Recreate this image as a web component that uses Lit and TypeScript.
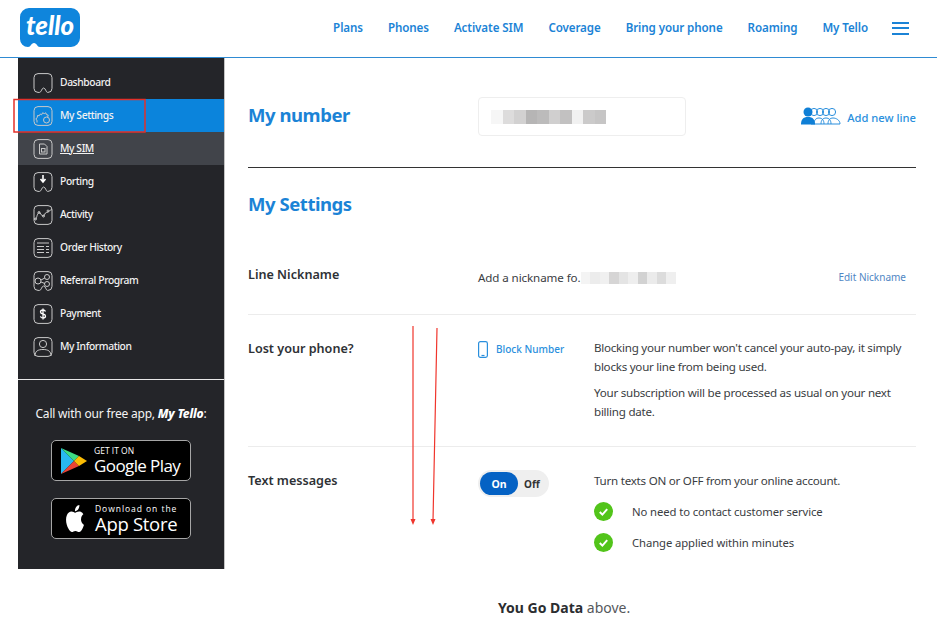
import { LitElement, html, css, svg } from "lit";
import { customElement } from "lit/decorators.js";

const NAV = ["Plans", "Phones", "Activate SIM", "Coverage", "Bring your phone", "Roaming", "My Tello"];

// the outline every side menu icon shares, a rounded square with a notch at the bottom
const BUBBLE = "M5 .6h10a4 4 0 0 1 4 4v10.800a4 4 0 0 1-4 4h-.5c-1.600 0-1.800-4.400-4-4.400-1.800 0-2 4.400-4 4.400H5a4 4 0 0 1-4-4V4.600a4 4 0 0 1 4-4z";
const BOX = "M5 .6h10a4 4 0 0 1 4 4v10.800a4 4 0 0 1-4 4H5a4 4 0 0 1-4-4V4.600a4 4 0 0 1 4-4z";

const MENU = [
  { label: "Dashboard", outline: BUBBLE, inner: svg`` },
  {
    label: "My Settings",
    outline: BOX,
    inner: svg`<path d="M4 16.500v-2.300l-1.200-1 1.500-2 .2-1.700 1.800.2 1-1.700 1.300.8 1-2 1.700.8 1.500-.8.6 1.800 1.800.5-.5 2"/><circle cx="13.500" cy="14" r="3"/>`,
    active: true,
  },
  {
    label: "My SIM",
    outline: BOX,
    inner: svg`<path d="M6.500 5h5l2.500 2.500V15H6.500z"/><rect x="8.500" y="9.500" width="3.500" height="3.500"/>`,
    current: true,
  },
  {
    label: "Porting",
    outline: BUBBLE,
    inner: svg`<path d="M10 3v6M7.500 7l2.500 3 2.500-3" stroke="#fff" stroke-width="1.600"/>`,
  },
  {
    label: "Activity",
    outline: BOX,
    inner: svg`<path d="M1 14h1.500c1.500 0 1-5 3.500-6.500 1.500-.5 2 3.500 4 3.500s1.500-3.500 3.500-3.500 1.500-1.500 5.500-3"/><circle cx="2.500" cy="14" r="1"/><circle cx="6" cy="7.500" r="1"/><circle cx="10.500" cy="11" r="1"/><circle cx="15" cy="6" r="1"/>`,
  },
  {
    label: "Order History",
    outline: BOX,
    inner: svg`<path d="M4 5h12M4 8.500h7M13 8.500h3M4 11.500h7M13 11.500h3M4 14.500h7M13 14.500h3"/>`,
  },
  {
    label: "Referral Program",
    outline: BUBBLE,
    inner: svg`<circle cx="5" cy="10" r="3"/><circle cx="14" cy="6" r="2.500"/><circle cx="14" cy="13" r="2.500"/><path d="M8 9l3.800-2M8 11l3.800 1.500"/>`,
  },
  {
    label: "Payment",
    outline: BOX,
    inner: svg`<path d="M12.500 7.500c-.5-1.200-1.500-1.500-2.500-1.500-1.500 0-2.500.8-2.500 2s1 1.700 2.500 2 2.500.8 2.500 2-1 2-2.500 2c-1.200 0-2.200-.5-2.600-1.600M10 4.500v11" stroke="#fff" stroke-width="1.300"/>`,
  },
  {
    label: "My Information",
    outline: BOX,
    inner: svg`<circle cx="10" cy="7" r="3.600"/><path d="M2 19c0-5 3-6.500 8-6.500s8 1.500 8 6.500"/>`,
  },
];

const NUMBER_BLUR = ["#f6f6f6", "#dddcdc", "#d2d1d1", "#b6b5b5", "#bcbbbb", "#d0cfcf", "#c2c1c1", "#f1f1f1", "#cbcaca", "#c6c5c5"];
const NICK_BLUR = ["#f4f4f4", "#ececec", "#f0f0f0", "#d6d5d5", "#e4e4e4", "#eeeeee", "#d2d2d2", "#ebebeb", "#dcdcdc", "#efefef"];

@customElement("app-root")
export class AppRoot extends LitElement {
  static styles = css`
    :host {
      display: block;
      position: relative;
      width: 937px;
      height: 634px;
      overflow: hidden;
      background: #fff;
      font-family: "Noto Sans", "Open Sans", sans-serif;
      color: #3a3d42;
    }
    a {
      color: inherit;
      text-decoration: none;
    }

    /* top bar */
    .top {
      height: 57px;
      border-bottom: 1px solid #2f8bd3;
      display: flex;
      align-items: center;
      padding: 0 20px;
    }
    .logo {
      display: block;
      margin-top: -2px;
    }
    .logo text {
      font-family: "Lato", sans-serif;
      font-weight: 900;
      font-style: italic;
      font-size: 26px;
      fill: #fff;
    }
    .nav {
      margin-left: auto;
      margin-top: -2px;
      padding-right: 8px;
      display: flex;
      align-items: center;
      gap: 25px;
      font-size: 11.600px;
      font-weight: 600;
      letter-spacing: -0.1px;
      color: #1b83d6;
    }
    .burger {
      width: 17px;
      height: 13px;
      margin-left: -1px;
      margin-top: 1px;
      border-top: 2px solid #1b83d6;
      border-bottom: 2px solid #1b83d6;
      position: relative;
      box-sizing: border-box;
    }
    .burger::after {
      content: "";
      position: absolute;
      left: 0;
      right: 0;
      top: 3.500px;
      height: 2px;
      background: #1b83d6;
    }

    .body {
      display: flex;
    }

    /* side menu */
    .side {
      margin-left: 18px;
      width: 206px;
      height: 511px;
      background: #242529;
      border-right: 1px solid #c4c4c4;
      flex: none;
      display: flex;
      flex-direction: column;
      color: #fff;
    }
    .menu {
      padding: 8px 0 16px;
      border-bottom: 1px solid #e8e8e8;
    }
    .item {
      height: 33px;
      display: flex;
      align-items: center;
      gap: 7px;
      padding-left: 15px;
      font-size: 10.300px;
      font-weight: 500;
      letter-spacing: -0.4px;
      color: #f2f2f2;
    }
    .item span {
      margin-top: -2px;
    }
    .item.active {
      background: #0b84dc;
    }
    .item.current {
      background: #41444a;
    }
    .item.current span {
      text-decoration: underline;
    }
    .item svg {
      fill: none;
      stroke: #c9c9c9;
      stroke-width: 1;
      flex: none;
    }
    .app {
      display: flex;
      flex-direction: column;
      align-items: center;
      padding-top: 25px;
    }
    .app p {
      margin: 0 0 18px;
      font-size: 12px;
      line-height: 17px;
      letter-spacing: -0.2px;
      color: #f4f4f4;
    }
    .app b {
      font-style: italic;
      font-weight: 800;
      color: #fff;
    }
    .store {
      width: 140px;
      height: 41px;
      box-sizing: border-box;
      background: #000;
      border: 1px solid #a6a6a6;
      border-radius: 5px;
      display: flex;
      align-items: center;
      margin-bottom: 17px;
      color: #fff;
    }
    .store .small {
      display: block;
      font-family: "Open Sans", sans-serif;
      font-size: 8.500px;
      line-height: 10px;
    }
    .store .big {
      display: block;
      font-family: "Open Sans", sans-serif;
      font-size: 17px;
      line-height: 19px;
      letter-spacing: -0.6px;
    }
    .gplay {
      gap: 6px;
      padding-left: 9px;
    }
    .astore {
      gap: 9px;
      padding-left: 12px;
    }
    .astore .small {
      letter-spacing: 0.95px;
    }
    .astore .big {
      font-size: 18.500px;
      line-height: 20px;
      letter-spacing: -0.3px;
    }

    /* main column */
    .main {
      margin-left: 23px;
      width: 668px;
    }
    h2 {
      margin: 0;
      font-size: 18.500px;
      font-weight: 700;
      letter-spacing: -0.45px;
      line-height: 26px;
      color: #1b83d6;
    }
    .number {
      height: 110px;
      box-sizing: border-box;
      border-bottom: 1px solid #333;
      display: grid;
      grid-template-columns: 230px 208px 1fr;
      padding-top: 39px;
      align-items: start;
    }
    .number h2 {
      margin-top: 5px;
    }
    .numbox {
      height: 39px;
      box-sizing: border-box;
      border: 1px solid #eeeeee;
      border-radius: 4px;
      display: flex;
      align-items: center;
      padding-left: 12px;
    }
    .blur {
      display: flex;
    }
    .blur i {
      display: block;
      width: 11.500px;
      height: 14px;
    }
    .nick-blur i {
      width: 9.500px;
      height: 12px;
    }
    .add {
      display: flex;
      align-items: center;
      justify-content: flex-end;
      gap: 6px;
      margin-top: 9px;
      font-size: 11.200px;
      font-weight: 500;
      color: #2a8fdd;
    }
    .add span {
      margin-top: 4px;
    }
    .settings-title {
      margin-top: 23px;
    }
    .row {
      display: grid;
      grid-template-columns: 230px 116px 1fr;
      border-bottom: 1px solid #ececec;
    }
    .row.plain {
      border-bottom: 0;
    }
    .row h3 {
      margin: 0;
      font-size: 12.600px;
      line-height: 18px;
      font-weight: 600;
      color: #2e3135;
    }
    .nickname {
      height: 98px;
      box-sizing: border-box;
      padding-top: 49px;
      grid-template-columns: 230px 1fr auto;
    }
    .nick-text {
      display: flex;
      font-size: 11.600px;
      line-height: 18px;
      letter-spacing: -0.1px;
      padding-top: 2.500px;
    }
    .nick-blur {
      margin-top: 3px;
    }
    .edit {
      font-size: 10px;
      line-height: 18px;
      padding: 2px 10px 0 0;
      color: #4f86c4;
    }
    .lost {
      height: 132px;
      box-sizing: border-box;
      padding-top: 25px;
    }
    .block {
      display: flex;
      align-items: center;
      gap: 8px;
      height: 18px;
      font-size: 10px;
      font-weight: 500;
      color: #2a8fdd;
    }
    .copy p {
      margin: 0 0 7px;
      font-size: 11.600px;
      line-height: 19px;
      letter-spacing: -0.25px;
    }
    .lost .copy {
      margin-top: -2px;
    }
    .texts {
      padding-top: 25px;
    }
    .switch {
      width: 71px;
      height: 27px;
      box-sizing: border-box;
      padding: 2px;
      border-radius: 14px;
      background: #efefef;
      display: flex;
      align-items: center;
      font-size: 10.500px;
      font-weight: 700;
      color: #333;
      margin-top: -2px;
    }
    .switch .on {
      width: 38px;
      height: 23px;
      border-radius: 12px;
      background: #0562c4;
      color: #fff;
      display: flex;
      align-items: center;
      justify-content: center;
    }
    .switch .off {
      margin-left: 6px;
      font-size: 10px;
    }
    .check {
      display: flex;
      align-items: center;
      gap: 19px;
      height: 31px;
      font-size: 11.300px;
      letter-spacing: -0.1px;
    }
    .copy .lead {
      margin-bottom: 6px;
      margin-top: -1px;
    }
    .tail {
      position: absolute;
      left: 498px;
      top: 598px;
      font-size: 14px;
      line-height: 19px;
      color: #55585c;
    }
    .tail b {
      color: #2b2d30;
    }

    /* markup drawn over the screenshot */
    .mark {
      position: absolute;
      left: 0;
      top: 0;
      pointer-events: none;
    }
  `;

  private renderIcon(outline: string, inner: unknown) {
    return html`<svg width="20" height="20" viewBox="0 0 20 20"><path d=${outline} />${inner}</svg>`;
  }

  private renderBlur(cells: string[], extra = "") {
    return html`<div class="blur ${extra}">
      ${cells.map((c) => html`<i style="background:${c}"></i>`)}
    </div>`;
  }

  private renderCheck(text: string) {
    return html`<div class="check">
      <svg width="19" height="19" viewBox="0 0 19 19">
        <circle cx="9.500" cy="9.500" r="9.500" fill="#52c41a" />
        <path d="M5.800 10l2.600 2.600 4.800-5.400" fill="none" stroke="#fff" stroke-width="2" />
      </svg>
      <span>${text}</span>
    </div>`;
  }

  render() {
    return html`
      <header class="top">
        <svg class="logo" width="60" height="39" viewBox="0 0 60 39">
          <path
            d="M9 0h42a9 9 0 0 1 9 9v21a9 9 0 0 1-9 9H20c-3 0-3-4-6-4s-3 4-6 4a8 8 0 0 1-8-8V9a9 9 0 0 1 9-9z"
            fill="#0f85dc"
          />
          <text x="6" y="27" textLength="48" lengthAdjust="spacingAndGlyphs">tello</text>
        </svg>
        <nav class="nav">
          ${NAV.map((n) => html`<a href="#">${n}</a>`)}
          <div class="burger"></div>
        </nav>
      </header>

      <div class="body">
        <aside class="side">
          <div class="menu">
            ${MENU.map(
              (m) => html`<div class="item ${m.active ? "active" : ""} ${m.current ? "current" : ""}">
                ${this.renderIcon(m.outline, m.inner)}<span>${m.label}</span>
              </div>`
            )}
          </div>
          <div class="app">
            <p>Call with our free app, <b>My Tello</b>:</p>
            <a class="store gplay" href="#">
              <svg width="27" height="28" viewBox="0 0 27 28">
                <path d="M0 1v26l13-13z" fill="#28b8f0" />
                <path d="M0 1l13 13 5-5z" fill="#3ddc84" />
                <path d="M0 27l13-13 5 5z" fill="#ea4335" />
                <path d="M18 9l8 5-8 5-5-5z" fill="#fbbc04" />
              </svg>
              <div>
                <span class="small">GET IT ON</span>
                <span class="big">Google Play</span>
              </div>
            </a>
            <a class="store astore" href="#">
              <svg width="22" height="27" viewBox="0 0 24 24" preserveAspectRatio="none" fill="#fff">
                <path
                  d="M12.152 6.896c-.948 0-2.415-1.078-3.960-1.040-2.040.027-3.910 1.183-4.961 3.014-2.117 3.675-.546 9.103 1.519 12.090 1.013 1.454 2.208 3.090 3.792 3.039 1.520-.065 2.090-.987 3.935-.987 1.831 0 2.350.987 3.960.948 1.637-.026 2.676-1.480 3.676-2.948 1.156-1.688 1.636-3.325 1.662-3.415-.039-.013-3.182-1.221-3.220-4.857-.026-3.040 2.480-4.494 2.597-4.559-1.429-2.090-3.623-2.324-4.390-2.376-2-.156-3.675 1.090-4.610 1.090zM15.530 3.830c.843-1.012 1.400-2.427 1.245-3.830-1.207.052-2.662.805-3.532 1.818-.780.896-1.454 2.338-1.273 3.714 1.338.104 2.715-.688 3.559-1.701"
                />
              </svg>
              <div>
                <span class="small">Download on the</span>
                <span class="big">App Store</span>
              </div>
            </a>
          </div>
        </aside>

        <main class="main">
          <section class="number">
            <h2>My number</h2>
            <div class="numbox">${this.renderBlur(NUMBER_BLUR)}</div>
            <a class="add" href="#">
              <svg width="40" height="18" viewBox="0 0 40 18" fill="none" stroke="#2a8fdd" stroke-width="1">
                <circle cx="13" cy="5" r="3.600" />
                <circle cx="19" cy="5" r="3.600" />
                <circle cx="25" cy="5" r="3.600" />
                <circle cx="31" cy="5" r="3.600" />
                <path d="M13 17c0-4 2-6 5-6s5 2 5 6M20 17c0-4 2-6 5-6s5 2 5 6M27 17c0-4 2-6 5-6s7 2 7 6H10" />
                <circle cx="7" cy="5" r="4.500" fill="#0f7fd6" stroke="none" />
                <path d="M0 17.500c0-5 2-7.500 7-7.500s7 2.500 7 7.500z" fill="#0f7fd6" stroke="none" />
              </svg>
              <span>Add new line</span>
            </a>
          </section>

          <h2 class="settings-title">My Settings</h2>

          <section class="row nickname">
            <h3>Line Nickname</h3>
            <div class="nick-text">
              <span>Add a nickname fo.</span>${this.renderBlur(NICK_BLUR, "nick-blur")}
            </div>
            <a class="edit" href="#">Edit Nickname</a>
          </section>

          <section class="row lost">
            <h3>Lost your phone?</h3>
            <a class="block" href="#">
              <svg width="10" height="17" viewBox="0 0 10 17" fill="none" stroke="#2a8fdd" stroke-width="1.200">
                <rect x=".6" y=".6" width="8.800" height="15.800" rx="1.800" />
                <path d="M3.500 14.500h3" />
              </svg>
              <span>Block Number</span>
            </a>
            <div class="copy">
              <p>Blocking your number won't cancel your auto-pay, it simply blocks your line from being used.</p>
              <p>Your subscription will be processed as usual on your next billing date.</p>
            </div>
          </section>

          <section class="row plain texts">
            <h3>Text messages</h3>
            <div class="switch">
              <span class="on">On</span><span class="off">Off</span>
            </div>
            <div class="copy">
              <p class="lead">Turn texts ON or OFF from your online account.</p>
              ${this.renderCheck("No need to contact customer service")}
              ${this.renderCheck("Change applied within minutes")}
            </div>
          </section>
        </main>
      </div>

      <div class="tail"><b>You Go Data</b> above.</div>

      <svg class="mark" width="937" height="634" viewBox="0 0 937 634" fill="none">
        <rect x="14" y="99.500" width="131" height="32.500" stroke="#e3302a" stroke-width="1.500" />
        <path d="M413 326v195M437 328l-4 193" stroke="#f0352c" stroke-width="1.200" />
        <path d="M410.500 519l2.500 6 2.500-6zM430.500 519l2.500 6 2.500-6z" fill="#f0352c" />
      </svg>
    `;
  }
}
